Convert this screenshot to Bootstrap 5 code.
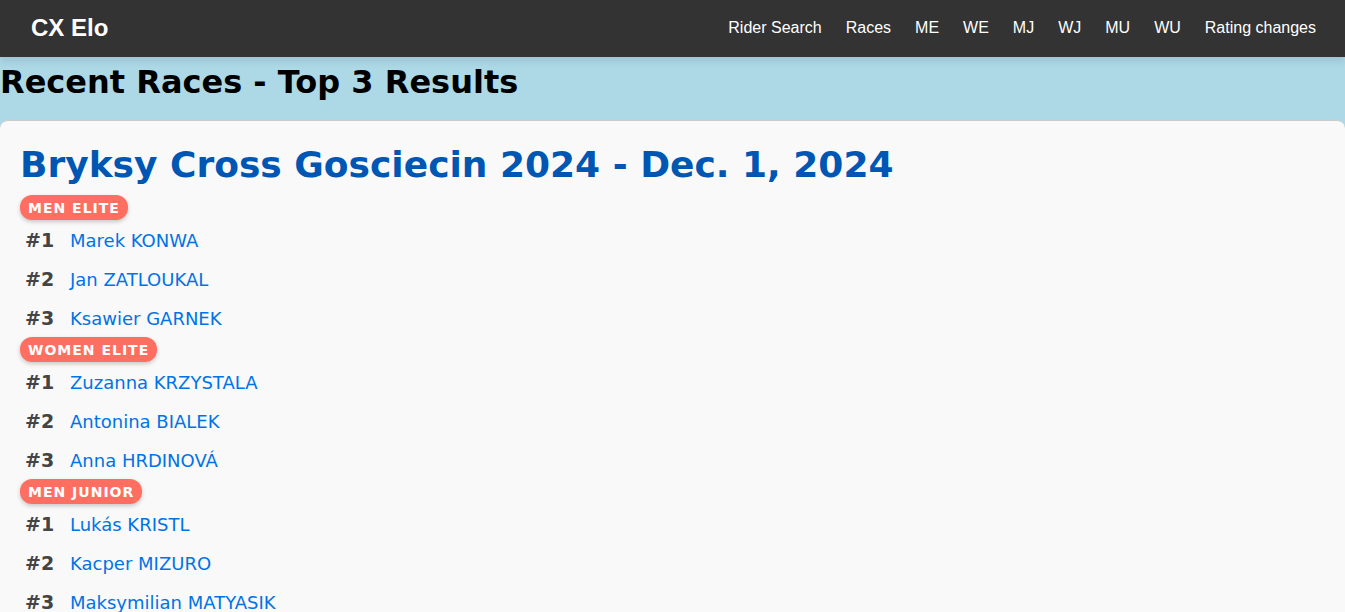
<!DOCTYPE html>
<html lang="en">
<head>
<meta charset="utf-8">
<meta name="viewport" content="width=device-width, initial-scale=1">
<title>CX Elo</title>
<link href="https://cdn.jsdelivr.net/npm/bootstrap@5.3.0/dist/css/bootstrap.min.css" rel="stylesheet">
<style>
html { scrollbar-width: none; }
html::-webkit-scrollbar { display: none; }
body { background: #add8e6; color: #000; font-family: Verdana, "DejaVu Sans", sans-serif; }
.site-nav { background: #333; font-family: "Liberation Sans", Arial, sans-serif; min-height: 57px; padding: 0 29px 2px 31px; box-shadow: 0 4px 8px rgba(0,0,0,.1); }
.site-nav .navbar-brand { color: #fff; font-size: 24px; font-weight: 700; line-height: 36px; padding: 0; }
.site-nav .nav-link { color: #fff; font-size: 16px; line-height: 24px; }
.site-links { gap: 24px; }
.page-title { font-size: 32px; font-weight: 700; line-height: 50px; margin: 0 0 13px; }
.race-card { background: #f9f9f9; border-top: 1px solid #ccc; border-radius: 8px; padding: 20px; }
.race-name { color: #0056b3; font-size: 36px; font-weight: 700; line-height: 48px; margin: 0 0 6px; }
.category { background: #ff6f61; color: #fff; font-size: 14px; font-weight: 700; line-height: 15px; letter-spacing: 1px; padding: 6px 8px 4px; border-radius: 12px; box-shadow: 0 2px 4px rgba(0,0,0,.2); text-transform: uppercase; width: fit-content; margin: 0; }
.rider { height: 39px; padding: 2px 5px 0; font-size: 18px; }
.rank { color: #444; font-size: 19px; font-weight: 700; width: 45px; }
.rider a { color: #0073e6; text-decoration: none; }
</style>
</head>
<body>
<nav class="navbar navbar-expand site-nav">
  <a class="navbar-brand" href="#">CX Elo</a>
  <div class="navbar-nav ms-auto site-links">
    <a class="nav-link px-0" href="#">Rider Search</a>
    <a class="nav-link px-0" href="#">Races</a>
    <a class="nav-link px-0" href="#">ME</a>
    <a class="nav-link px-0" href="#">WE</a>
    <a class="nav-link px-0" href="#">MJ</a>
    <a class="nav-link px-0" href="#">WJ</a>
    <a class="nav-link px-0" href="#">MU</a>
    <a class="nav-link px-0" href="#">WU</a>
    <a class="nav-link px-0" href="#">Rating changes</a>
  </div>
</nav>
<main>
  <h1 class="page-title">Recent Races - Top 3 Results</h1>
  <section class="race-card">
    <h2 class="race-name">Bryksy Cross Gosciecin 2024 - Dec. 1, 2024</h2>
    <h3 class="category">Men Elite</h3>
    <ul class="list-unstyled m-0">
      <li class="rider d-flex align-items-center"><span class="rank">#1</span><a href="#">Marek KONWA</a></li>
      <li class="rider d-flex align-items-center"><span class="rank">#2</span><a href="#">Jan ZATLOUKAL</a></li>
      <li class="rider d-flex align-items-center"><span class="rank">#3</span><a href="#">Ksawier GARNEK</a></li>
    </ul>
    <h3 class="category">Women Elite</h3>
    <ul class="list-unstyled m-0">
      <li class="rider d-flex align-items-center"><span class="rank">#1</span><a href="#">Zuzanna KRZYSTALA</a></li>
      <li class="rider d-flex align-items-center"><span class="rank">#2</span><a href="#">Antonina BIALEK</a></li>
      <li class="rider d-flex align-items-center"><span class="rank">#3</span><a href="#">Anna HRDINOVÁ</a></li>
    </ul>
    <h3 class="category">Men Junior</h3>
    <ul class="list-unstyled m-0">
      <li class="rider d-flex align-items-center"><span class="rank">#1</span><a href="#">Lukás KRISTL</a></li>
      <li class="rider d-flex align-items-center"><span class="rank">#2</span><a href="#">Kacper MIZURO</a></li>
      <li class="rider d-flex align-items-center"><span class="rank">#3</span><a href="#">Maksymilian MATYASIK</a></li>
    </ul>
  </section>
</main>
<script src="https://cdn.jsdelivr.net/npm/bootstrap@5.3.0/dist/js/bootstrap.bundle.min.js"></script>
</body>
</html>
